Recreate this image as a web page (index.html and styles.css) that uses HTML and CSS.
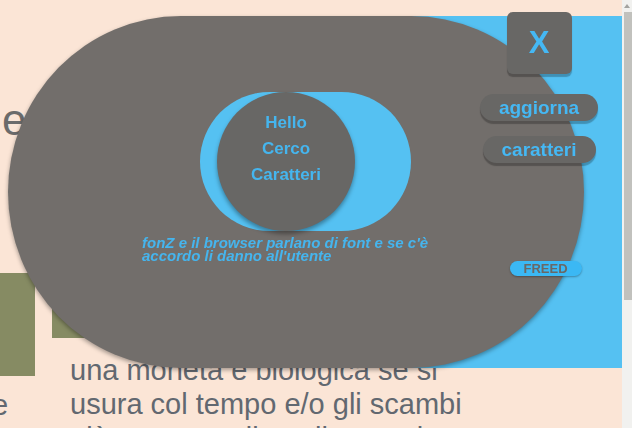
FILE: index.html
```html
<!DOCTYPE html>
<html lang="it">
<head>
    <meta charset="UTF-8">
    <meta name="viewport" content="width=device-width, initial-scale=1.0">
    <title>Cerco Caratteri</title>
    <link rel="stylesheet" href="styles.css">
</head>
<body>
    <main class="page">
        <h1 class="title">economia</h1>
        <div class="columns">
            <div class="col col-left">
                <div class="swatch swatch-tall"></div>
                <p class="text text-left">e</p>
            </div>
            <div class="col col-right">
                <div class="swatch swatch-short"></div>
                <p class="text">una moneta è biologica se si usura col tempo e/o gli scambi più soggetta di quella attuale e la sua vita dura poco</p>
            </div>
        </div>
    </main>

    <div class="overlay">
        <div class="panel"></div>
        <div class="bubble">
            <div class="pill">
                <div class="disc">Hello<br>Cerco<br>Caratteri</div>
            </div>
            <p class="note">fonZ e il browser parlano di font e se c'è accordo li danno all'utente</p>
        </div>
        <div class="controls">
            <button class="close">X</button>
            <button class="action action-first">aggiorna</button>
            <button class="action">caratteri</button>
            <span class="badge">FREED</span>
        </div>
    </div>

    <div class="scrollbar">
        <span class="scroll-arrow"></span>
        <span class="scroll-thumb"></span>
    </div>
</body>
</html>
```

FILE: styles.css
```css
html, body {
    margin: 0;
    background-color: #fbe5d6;
    font-family: "Liberation Sans", Arial, sans-serif;
}

.page {
    min-height: 600px;
    box-sizing: border-box;
    padding-top: 95px;
    margin-right: 10px;
    overflow: hidden;
}

.title {
    margin: 0 0 0 2px;
    font-size: 44px;
    line-height: 50px;
    font-weight: normal;
    color: #6b6b6b;
}

.columns {
    display: flex;
    margin-top: 128px;
}

.col-left {
    width: 35px;
    flex: none;
}

.col-right {
    margin-left: 17px;
}

.swatch {
    background-color: #868b63;
}

.swatch-tall {
    height: 103px;
}

.swatch-short {
    width: 230px;
    height: 65px;
}

.text {
    margin: 15px 0 0;
    padding-left: 18px;
    width: 415px;
    font-size: 29px;
    line-height: 34px;
    color: #626870;
}

.text-left {
    margin: 12px 0 0 -8px;
    padding: 0;
    width: auto;
}

/* overlay window */
.overlay {
    position: fixed;
    top: 16px;
    left: 8px;
    right: 10px;
    height: 352px;
    display: grid;
}

.overlay > * {
    grid-area: 1 / 1;
}

.panel {
    justify-self: end;
    width: 320px;
    background-color: #55c1f2;
}

.bubble {
    justify-self: start;
    width: 576px;
    height: 352px;
    box-sizing: border-box;
    padding: 76px 0 0 134px;
    border-radius: 30% / 50%;
    background-color: #726e6b;
    box-shadow: 0 2px 4px rgba(0, 0, 0, 0.35);
}

.pill {
    width: 211px;
    height: 139px;
    box-sizing: border-box;
    margin-left: 58px;
    padding-left: 17px;
    border-radius: 70px;
    background-color: #55c1f2;
}

.disc {
    width: 138px;
    height: 139px;
    box-sizing: border-box;
    padding-top: 18px;
    border-radius: 50%;
    background-color: #686765;
    box-shadow: 0 3px 4px rgba(0, 0, 0, 0.35);
    text-align: center;
    font-size: 17px;
    font-weight: bold;
    line-height: 26px;
    color: #45b5ee;
}

.note {
    width: 320px;
    margin: 5px 0 0;
    font-size: 15px;
    font-weight: bold;
    font-style: italic;
    line-height: 13px;
    color: #45b5ee;
}

.controls {
    justify-self: end;
    width: 130px;
    margin: -4px 18px 0 0;
    display: flex;
    flex-direction: column;
    align-items: center;
}

.close {
    width: 65px;
    height: 62px;
    border: none;
    border-radius: 6px;
    background-color: #686765;
    box-shadow: 0 3px 1px rgba(0, 0, 0, 0.25);
    font-family: inherit;
    font-size: 31px;
    font-weight: bold;
    color: #45b8f4;
    padding: 0;
}

.action {
    height: 27px;
    margin-top: 15px;
    padding: 0 19px;
    border: none;
    border-radius: 14px;
    background-color: #686765;
    box-shadow: 0 3px 1px rgba(0, 0, 0, 0.25);
    font-family: inherit;
    font-size: 19px;
    font-weight: bold;
    line-height: 27px;
    color: #45b8f4;
}

.action-first {
    margin-top: 20px;
}

.badge {
    width: 72px;
    height: 15px;
    margin: 98px 0 0 13px;
    border-radius: 8px;
    background-color: #3bb8f4;
    box-shadow: 0 1px 2px rgba(0, 0, 0, 0.3);
    text-align: center;
    font-size: 13px;
    font-weight: bold;
    line-height: 15px;
    color: #696866;
}

/* page scrollbar */
.scrollbar {
    position: fixed;
    top: 0;
    right: 0;
    bottom: 0;
    width: 10px;
    background-color: #f1f1ef;
    display: flex;
    flex-direction: column;
    align-items: flex-end;
}

.scroll-arrow {
    width: 0;
    height: 0;
    margin: 4px 2px 0 0;
    border-left: 3px solid transparent;
    border-right: 3px solid transparent;
    border-bottom: 4px solid #a3a3a0;
}

.scroll-thumb {
    width: 8px;
    height: 288px;
    margin-top: 4px;
    background-color: #c1c1bd;
}
```
